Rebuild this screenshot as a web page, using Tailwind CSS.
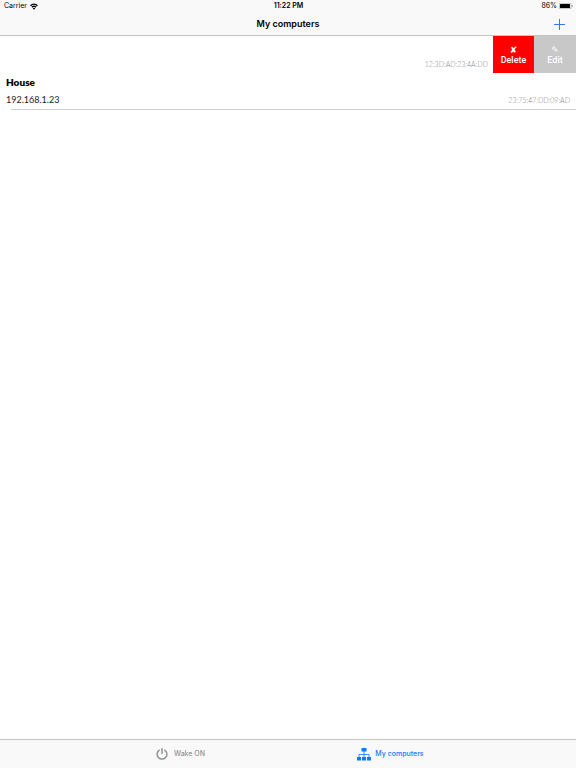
<!DOCTYPE html>
<html lang="en">
<head>
  <meta charset="UTF-8">
  <meta name="viewport" content="width=device-width, initial-scale=1.0">
  <title>My computers</title>
  <script src="https://cdn.jsdelivr.net/npm/@tailwindcss/browser@4"></script>
</head>
<body class="min-h-screen flex flex-col bg-white text-black font-['Inter','Liberation_Sans',sans-serif]">
  <header class="bg-[#f9f9f9] border-b border-[#c4c4c4]">
    <!-- Status bar -->
    <div class="h-3 grid grid-cols-3 items-center pl-1 pr-[3px] text-[7px] leading-3">
      <div class="flex items-center gap-[3px]">
        <span>Carrier</span>
        <svg class="w-2 h-[7px]" viewBox="0 0 16 13" fill="none" stroke="#000" stroke-width="3">
          <path d="M1 5C5 1 11 1 15 5"/>
          <path d="M3.800 8C6.300 5.700 9.700 5.700 12.200 8"/>
          <path d="M8 13 5.500 10.300C7 9 9 9 10.500 10.300Z" fill="#000" stroke="none"/>
        </svg>
      </div>
      <span class="text-center font-semibold">11:22 PM</span>
      <div class="flex items-center justify-end gap-[2px]">
        <span>86%</span>
        <svg class="w-[14px] h-[6px]" viewBox="0 0 28 12">
          <rect x=".5" y=".5" width="24" height="11" rx="2.500" fill="none" stroke="#777"/>
          <rect x="2" y="2" width="20" height="8" rx="1" fill="#000"/>
          <path d="M26 4C28 4.500 28 7.500 26 8Z" fill="#777"/>
        </svg>
      </div>
    </div>
    <!-- Navigation bar -->
    <div class="h-[23px] grid grid-cols-3 items-center">
      <h1 class="col-start-2 text-center text-[9px] leading-6 font-semibold">My computers</h1>
      <button type="button" aria-label="Add" class="justify-self-end mr-[11px]">
        <svg class="w-[11px] h-[11px]" viewBox="0 0 11 11" stroke="#3478f6" stroke-width="1">
          <path d="M5.500 0V11M0 5.500H11"/>
        </svg>
      </button>
    </div>
  </header>

  <main class="flex-1">
    <ul class="font-['Lato',sans-serif]">
      <!-- Row swiped open -->
      <li class="h-[37px] flex justify-end">
        <span class="self-end pr-[5px] pb-1 text-[7px] leading-[10px] font-light text-[#888]">12:3D:AD:23:4A:DD</span>
        <div class="flex text-white text-[9px] leading-[10px] font-medium font-['Roboto',sans-serif]">
          <button type="button" class="w-[41px] bg-[#ff0000] flex flex-col items-center justify-center">
            <span class="font-['DejaVu_Sans',sans-serif]" aria-hidden="true">✘</span>
            <span>Delete</span>
          </button>
          <button type="button" class="w-[42px] bg-[#c8c8c8] flex flex-col items-center justify-center">
            <span class="font-['DejaVu_Sans',sans-serif]" aria-hidden="true">✎</span>
            <span>Edit</span>
          </button>
        </div>
      </li>
      <li class="h-9 flex flex-col justify-between px-[6px] pt-[3px] pb-[3px]">
        <h2 class="text-[10px] leading-3 font-extrabold">House</h2>
        <div class="flex items-center justify-between">
          <span class="text-[9px] leading-3 text-[#222]">192.168.1.23</span>
          <span class="text-[7px] leading-[10px] font-light text-[#888]">23:75:47:DD:09:AD</span>
        </div>
      </li>
    </ul>
    <hr class="ml-[11px] border-[#d2d2d4]">
  </main>

  <!-- Tab bar -->
  <nav class="h-[29px] bg-[#f9f9f9] border-t border-[#c4c4c4] flex justify-center pr-[5px] text-[7px] font-medium">
    <a href="#wake" class="w-[210px] flex items-center justify-center gap-[6px] text-[#929292]">
      <svg class="w-3 h-3" viewBox="0 0 12 12" fill="none" stroke="currentColor" stroke-width="1.500" stroke-linecap="round">
        <path d="M6 .8V5.500"/>
        <path d="M3.200 2.200A4.900 4.900 0 1 0 8.800 2.200"/>
      </svg>
      Wake ON
    </a>
    <a href="#computers" class="w-[210px] flex items-center justify-center gap-1 text-[#107aff]" aria-current="page">
      <svg class="w-[14px] h-[14px]" viewBox="0 0 14 14" fill="currentColor">
        <path d="M4.500 1h5v3.500h-5zM0 10h4v3.500H0zM5 10h4v3.500H5zM10 10h4v3.500h-4z"/>
        <path d="M7 4V10M2 10V7.500H12V10" fill="none" stroke="currentColor" stroke-width=".8"/>
      </svg>
      My computers
    </a>
  </nav>
</body>
</html>
